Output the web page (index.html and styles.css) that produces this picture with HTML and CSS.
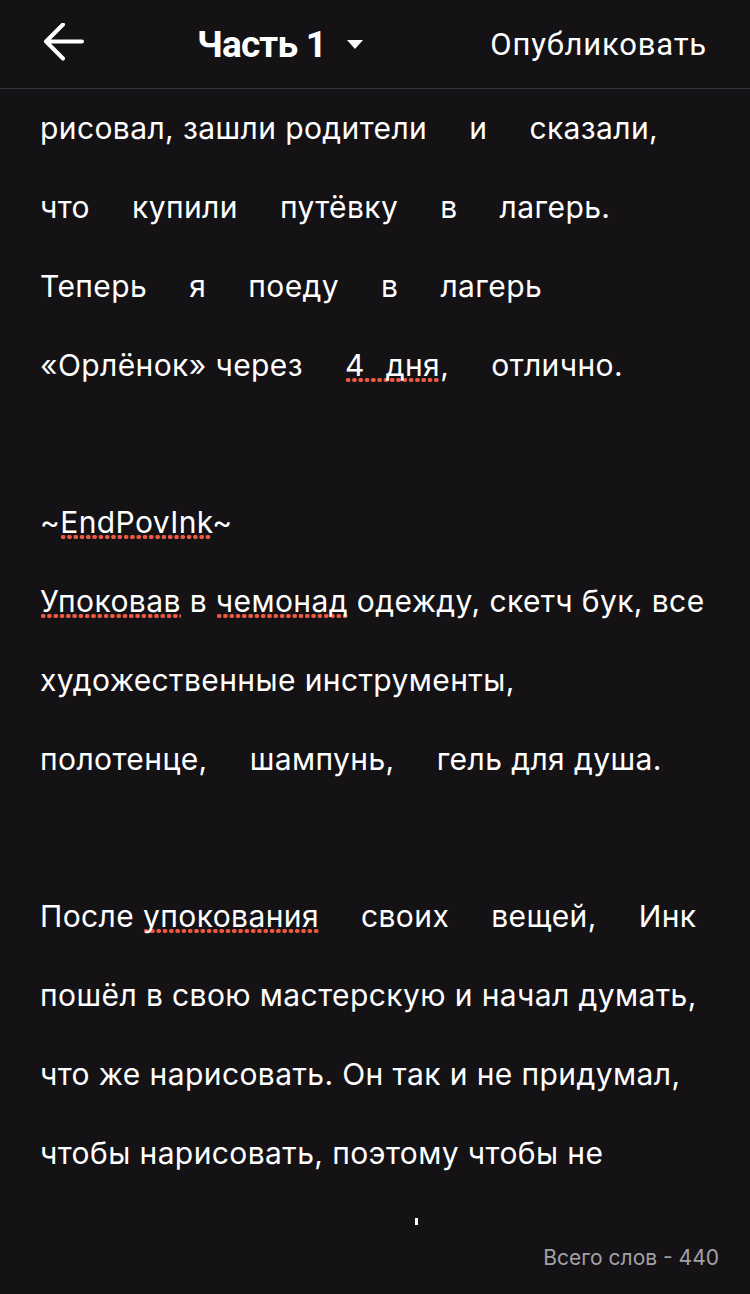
FILE: index.html
```html
<!DOCTYPE html>
<html lang="ru">
<head>
<meta charset="utf-8">
<link rel="stylesheet" href="styles.css">
</head>
<body>
<div class="screen">
  <header class="topbar">
    <svg class="back" width="44" height="40" viewBox="0 0 44 40">
      <path d="M4 18.5 H40 M21 1.5 L4 18.5 L21 35.5" fill="none" stroke="#fff" stroke-width="4" stroke-linecap="round" stroke-linejoin="round"/>
    </svg>
    <div class="title">
      <span class="title-text">Часть 1</span>
      <svg class="caret" width="16" height="9" viewBox="0 0 16 9"><path d="M0 0 H16 L8 9 Z" fill="#fff"/></svg>
    </div>
    <div class="publish">Опубликовать</div>
  </header>
  <main class="editor">
    <div class="line">рисовал, зашли родители<span class="gap"></span>и<span class="gap"></span>сказали,</div>
    <div class="line">что<span class="gap"></span>купили<span class="gap"></span>путёвку<span class="gap"></span>в<span class="gap"></span>лагерь.</div>
    <div class="line">Теперь<span class="gap"></span>я<span class="gap"></span>поеду<span class="gap"></span>в<span class="gap"></span>лагерь</div>
    <div class="line">«Орлёнок» через<span class="gap"></span><span class="spell">4<span class="gap-s"></span>дня</span>,<span class="gap"></span>отлично.</div>
    <div class="line"></div>
    <div class="line">~<span class="spell">EndPovInk</span>~</div>
    <div class="line"><span class="spell">Упоковав</span> в <span class="spell">чемонад</span> одежду, скетч бук, все</div>
    <div class="line">художественные инструменты,</div>
    <div class="line">полотенце,<span class="gap"></span>шампунь,<span class="gap"></span>гель для душа.</div>
    <div class="line"></div>
    <div class="line">После <span class="spell">упокования</span><span class="gap"></span>своих<span class="gap"></span>вещей,<span class="gap"></span>Инк</div>
    <div class="line">пошёл в свою мастерскую и начал думать,</div>
    <div class="line">что же нарисовать. Он так и не придумал,</div>
    <div class="line">чтобы нарисовать, поэтому чтобы не</div>
    <div class="cursor-row"><span class="cursor"></span></div>
  </main>
  <div class="count">Всего слов - 440</div>
</div>
</body>
</html>
```

FILE: styles.css
```css
html, body {
  margin: 0;
  padding: 0;
  background: #141215;
}
body {
  font-family: "Inter", "Liberation Sans", Arial, sans-serif;
  color: #fff;
}
.screen {
  position: relative;
  width: 750px;
  height: 1294px;
  overflow: hidden;
  background: #141215;
}
.topbar {
  height: 88px;
  display: flex;
  align-items: center;
  border-bottom: 1px solid #38363a;
  padding: 0 43px 0 42px;
  box-sizing: content-box;
}
.back {
  display: block;
  margin-top: -2px;
}
.title {
  display: flex;
  align-items: center;
  margin-left: 111px;
}
.title-text {
  font-family: "Roboto", "Liberation Sans", sans-serif;
  font-weight: 700;
  font-size: 37px;
  letter-spacing: -0.8px;
}
.caret {
  display: block;
  margin-left: 21px;
  margin-top: 1px;
}
.publish {
  margin-left: auto;
  font-family: "Roboto", "Liberation Sans", sans-serif;
  font-size: 31px;
  letter-spacing: 0.8px;
}
.editor {
  padding: 0 40px;
  font-size: 30px;
  letter-spacing: 0.4px;
}
.line {
  height: 78.85px;
  line-height: 78.85px;
  white-space: nowrap;
}
.gap {
  display: inline-block;
  width: 42px;
}
.gap-s {
  display: inline-block;
  width: 21px;
}
.spell {
  background-image: radial-gradient(circle, #ec5840 2.1px, transparent 2.5px);
  background-size: 6.3px 6px;
  background-repeat: repeat-x;
  background-position: 0 100%;
}
.cursor-row {
  padding-left: 375px;
  padding-top: 25px;
}
.cursor {
  display: block;
  width: 3px;
  height: 7px;
  background: #fff;
}
.count {
  position: absolute;
  right: 31px;
  bottom: 24px;
  font-size: 21px;
  color: #a3a1a6;
}
```
